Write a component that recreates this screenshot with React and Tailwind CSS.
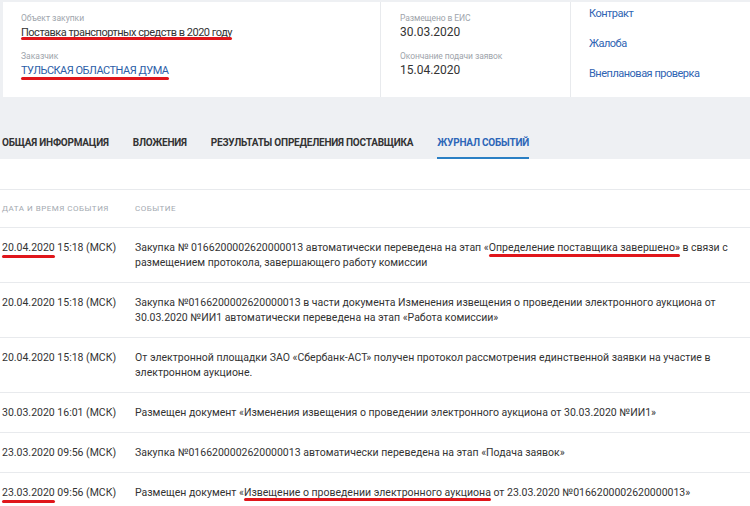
import React from "react";

const Mark = ({ children, off = "-bottom-[4px]", ext = "" }) => (
  <span className="relative">
    {children}
    <span className={`absolute left-0 right-0 h-[3px] rounded-full bg-[#e0161b] ${off} ${ext}`} />
  </span>
);

const rows = [
  {
    date: "20.04.2020 15:18 (МСК)",
    markDate: true,
    lines: [
      <>
        Закупка № 0166200002620000013 автоматически переведена на этап «
        <Mark off="-bottom-[3px]">Определение поставщика завершено»</Mark> в связи с
      </>,
      "размещением протокола, завершающего работу комиссии",
    ],
  },
  {
    date: "20.04.2020 15:18 (МСК)",
    lines: [
      "Закупка №0166200002620000013 в части документа Изменения извещения о проведении электронного аукциона от",
      "30.03.2020 №ИИ1 автоматически переведена на этап «Работа комиссии»",
    ],
  },
  {
    date: "20.04.2020 15:18 (МСК)",
    lines: [
      "От электронной площадки ЗАО «Сбербанк-АСТ» получен протокол рассмотрения единственной заявки на участие в",
      "электронном аукционе.",
    ],
  },
  {
    date: "30.03.2020 16:01 (МСК)",
    lines: ["Размещен документ «Изменения извещения о проведении электронного аукциона от 30.03.2020 №ИИ1»"],
  },
  {
    date: "23.03.2020 09:56 (МСК)",
    lines: ["Закупка №0166200002620000013 автоматически переведена на этап «Подача заявок»"],
  },
  {
    date: "23.03.2020 09:56 (МСК)",
    markDate: true,
    lines: [
      <>
        Размещен документ «<Mark off="-bottom-[2px]">Извещение о проведении электронного аукциона</Mark> от
        23.03.2020 №0166200002620000013»
      </>,
    ],
  },
];

export default function App() {
  return (
    <div className="w-[750px] h-[506px] overflow-hidden bg-white font-['Roboto',sans-serif] text-[#333]">
      {/* header area */}
      <div className="bg-[#eef0f3] pt-[2px] h-[159px] flex flex-col">
        <div className="ml-[3px] bg-white h-[95px] flex">
          <div className="w-[377px] pl-[18px] pt-[10px]">
            <div className="text-[8.5px] leading-[12px] text-[#9ea4ab]">Объект закупки</div>
            <div className="mt-[1px] text-[11px] leading-[15px] tracking-[-0.5px]">
              <Mark off="-bottom-[1px]" ext="-left-[2px] -right-[2px]">
                Поставка транспортных средств в 2020 году
              </Mark>
            </div>
            <div className="mt-[10px] text-[8.5px] leading-[12px] text-[#9ea4ab]">Заказчик</div>
            <div className="mt-[1px] text-[11px] leading-[15px] tracking-[-0.5px] text-[#2c5ea8]">
              <Mark off="-bottom-[3px]">ТУЛЬСКАЯ ОБЛАСТНАЯ ДУМА</Mark>
            </div>
          </div>
          <div className="w-[190px] border-l border-[#e8eaed] pl-[19px] pt-[10px]">
            <div className="text-[8.5px] leading-[12px] tracking-[-0.1px] text-[#9ea4ab]">Размещено в ЕИС</div>
            <div className="mt-[1px] text-[12px] leading-[15px]">30.03.2020</div>
            <div className="mt-[10px] text-[8.5px] leading-[12px] tracking-[-0.1px] text-[#9ea4ab]">
              Окончание подачи заявок
            </div>
            <div className="mt-[1px] text-[12px] leading-[15px]">15.04.2020</div>
          </div>
          <div className="flex-1 border-l border-[#e8eaed] pl-[18px] pt-[4px] flex flex-col gap-[15px] text-[11px] leading-[15px] tracking-[-0.5px] text-[#2f64b3]">
            <span>Контракт</span>
            <span>Жалоба</span>
            <span>Внеплановая проверка</span>
          </div>
        </div>
        <div className="mt-auto flex gap-[24px] pl-[2px] text-[10px] font-bold text-[#333] tracking-[-0.22px]">
          <div className="h-[32px] pb-[2px] flex items-center">ОБЩАЯ ИНФОРМАЦИЯ</div>
          <div className="h-[32px] pb-[2px] flex items-center">ВЛОЖЕНИЯ</div>
          <div className="h-[32px] pb-[2px] flex items-center">РЕЗУЛЬТАТЫ ОПРЕДЕЛЕНИЯ ПОСТАВЩИКА</div>
          <div className="h-[32px] flex items-center border-b-2 border-[#2a7fc4] text-[#2d66b8]">
            ЖУРНАЛ СОБЫТИЙ
          </div>
        </div>
      </div>

      {/* events table */}
      <div className="mt-[30px] border-t border-[#e8eaed]">
        <div className="h-[38px] flex items-center text-[8px] tracking-[0.5px] text-[#a3a9b0] border-b border-[#e8eaed]">
          <div className="w-[135px] pl-[2px]">ДАТА И ВРЕМЯ СОБЫТИЯ</div>
          <div>СОБЫТИЕ</div>
        </div>
        {rows.map((r, i) => (
          <div key={i} className="flex py-[12px] border-b border-[#e8eaed] text-[10.5px] leading-[15px]">
            <div className="w-[135px] pl-[2px] shrink-0">
              {r.markDate ? (
                <>
                  <Mark off="-bottom-[4px]">{r.date.slice(0, 10)}</Mark>
                  {r.date.slice(10)}
                </>
              ) : (
                r.date
              )}
            </div>
            <div className="flex flex-col whitespace-nowrap">
              {r.lines.map((l, j) => (
                <div key={j}>{l}</div>
              ))}
            </div>
          </div>
        ))}
      </div>
    </div>
  );
}
